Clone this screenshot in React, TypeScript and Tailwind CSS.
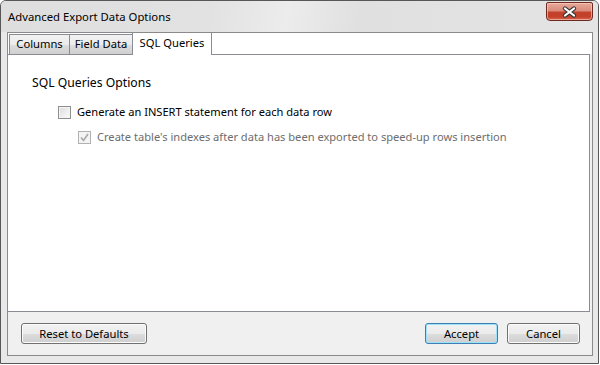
import React from "react";

const font = { fontFamily: '"Noto Sans", "Open Sans", sans-serif' };

// Win7 style push button
const Button = ({ label, width, isDefault }: { label: string; width: string; isDefault?: boolean }) => {
    return (
        <button
            className={`${width} h-[21px] rounded-[3px] border text-[11.2px] leading-none text-black flex items-center justify-center bg-[linear-gradient(to_bottom,#f2f2f2_0%,#ebebeb_50%,#dddddd_51%,#cfcfcf_100%)] ${
                isDefault
                    ? "border-[#3c7fb1] shadow-[inset_0_0_0_1px_#9fe0fb]"
                    : "border-[#707070] shadow-[inset_0_0_0_1px_#fcfcfc]"
            }`}
        >
            {label}
        </button>
    );
};

const Tab = ({ label, width, selected }: { label: string; width: string; selected?: boolean }) => {
    if (selected) {
        return (
            <div className={`${width} h-[22px] -mb-px relative z-10 bg-white border-x border-[#898c95] flex items-center justify-center text-[11.2px] text-black pb-[2px]`}>
                {label}
            </div>
        );
    }
    return (
        <div className={`${width} h-[20px] border-t border-l border-[#898c95] bg-[linear-gradient(to_bottom,#f2f2f2_0%,#ebebeb_50%,#dddddd_51%,#cfcfcf_100%)] flex items-center justify-center text-[11.2px] text-black`}>
            {label}
        </div>
    );
};

const CloseButton = () => (
    <div className="w-[47px] h-[19px] rounded-b-[4px] rounded-t-[2px] border border-[#6e2a1f] shadow-[inset_0_0_0_1px_rgba(255,210,200,0.6)] bg-[linear-gradient(to_bottom,#e9a99b_0%,#d98c7b_45%,#c3422b_55%,#c4402a_80%,#d4674f_100%)] flex items-center justify-center">
        <svg width="15" height="12" viewBox="0 0 15 12">
            <path d="M3 2.5 L12 9.5 M12 2.5 L3 9.5" stroke="#3b3b3b" strokeWidth="4.2" strokeLinecap="round" />
            <path d="M3 2.5 L12 9.5 M12 2.5 L3 9.5" stroke="#ffffff" strokeWidth="2.2" strokeLinecap="round" />
        </svg>
    </div>
);

export default function App() {
    return (
        <div className="w-[600px] h-[365px] bg-white" style={font}>
            <div className="w-[599px] h-[364px] border border-[#575757] rounded-t-[6px] bg-[#e8e8e8] flex flex-col overflow-hidden">
                {/* title bar */}
                <div className="h-[31px] flex items-start bg-[linear-gradient(100deg,#dedede_0%,#e2e2e2_35%,#ececec_48%,#e0e0e0_60%,#e4e4e4_100%)]">
                    <div className="flex-1 pl-[7px] pt-[8px] text-[11.3px] leading-[16px] text-black">Advanced Export Data Options</div>
                    <div className="mt-px mr-[5px]">
                        <CloseButton />
                    </div>
                </div>

                {/* client area */}
                <div className="flex-1 ml-[6px] mr-[5px] mb-[7px] border border-[#8a8a8a] bg-[#f0f0f0] flex flex-col">
                    {/* tab strip */}
                    <div className="h-[21px] bg-white flex items-end pl-px">
                        <Tab label="Columns" width="w-[60px]" />
                        <Tab label="Field Data" width="w-[63px]" />
                        <Tab label="SQL Queries" width="w-[80px]" selected />
                    </div>

                    {/* tab panel */}
                    <div className="h-[258px] mr-[2px] bg-white border-t border-r border-b border-[#898c95] pl-[24px] pt-[19px] text-black">
                        <div className="text-[12.2px] leading-[18px]">SQL Queries Options</div>

                        <div className="mt-[11px] ml-[26px] h-[18px] flex items-center gap-[6px] text-[11.1px]">
                            <div className="w-[13px] h-[13px] border border-[#8e8f8f] bg-[linear-gradient(135deg,#dcdcdc,#fbfbfb)] shadow-[inset_0_0_0_1px_#f4f4f4]" />
                            <span>Generate an INSERT statement for each data row</span>
                        </div>

                        <div className="mt-[7px] ml-[46px] h-[18px] flex items-center gap-[6px] text-[11.1px] text-[#6d6d6d]">
                            <div className="w-[13px] h-[13px] border border-[#b1b1b1] bg-[#f4f4f4] flex items-center justify-center">
                                <svg width="9" height="9" viewBox="0 0 9 9">
                                    <path d="M1 4.5 L3.5 7.5 L8 1" stroke="#a9a9a9" strokeWidth="1.6" fill="none" />
                                </svg>
                            </div>
                            <span>Create table's indexes after data has been exported to speed-up rows insertion</span>
                        </div>
                    </div>

                    {/* bottom buttons */}
                    <div className="flex-1 flex items-start pt-[11px] pl-[13px] pr-[12px]">
                        <Button label="Reset to Defaults" width="w-[126px]" />
                        <div className="flex-1" />
                        <div className="flex gap-[9px]">
                            <Button label="Accept" width="w-[73px]" isDefault />
                            <Button label="Cancel" width="w-[73px]" />
                        </div>
                    </div>
                </div>
            </div>
        </div>
    );
}
